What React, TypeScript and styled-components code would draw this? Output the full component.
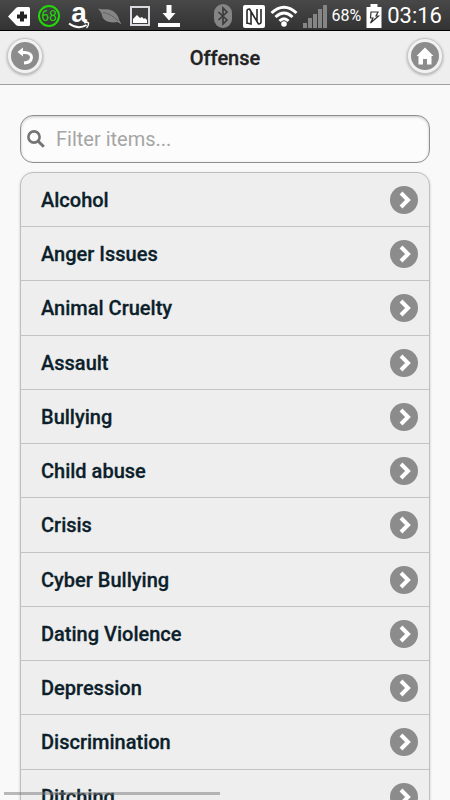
import React, { useState } from "react";
import styled, { createGlobalStyle } from "styled-components";

const GlobalStyle = createGlobalStyle`
  * { box-sizing: border-box; }
  body {
    margin: 0;
    background: #f9f9f9;
    font-family: Roboto, "Liberation Sans", sans-serif;
  }
`;

const Screen = styled.div`
  position: relative;
  display: flex;
  flex-direction: column;
  height: 100vh;
  overflow: hidden;
`;

const StatusBar = styled.div`
  display: flex;
  flex: none;
  justify-content: space-between;
  align-items: center;
  height: 31px;
  padding: 2px 8px 0;
  background: linear-gradient(#484848, #333333);
  border-bottom: 1px solid #000000;
  color: #ffffff;
`;

const StatusGroup = styled.div<{ $gap: number }>`
  display: flex;
  align-items: center;
  gap: ${({ $gap }) => $gap}px;
  height: 28px;

  svg { display: block; flex: none; }
`;

const ChargeBadge = styled.span`
  display: grid;
  place-items: center;
  width: 22px;
  height: 22px;
  border: 2px solid #25d60a;
  border-radius: 50%;
  color: #25d60a;
  font: 400 14px/16px Roboto, sans-serif;
`;

const StoreBadge = styled.span`
  display: grid;
  justify-items: center;
  width: 22px;
  height: 26px;
  font: 700 28px/20px "Liberation Sans", sans-serif;

  > * { grid-area: 1 / 1; }
  > svg { align-self: end; }
`;

const StoreLetter = styled.span`
  align-self: start;
`;

const Percent = styled.span`
  font-size: 16px;
  line-height: 20px;
  white-space: nowrap;
`;

const Clock = styled.time`
  font-size: 22px;
  line-height: 26px;
  text-align: right;
`;

const Header = styled.header`
  display: flex;
  flex: none;
  align-items: center;
  justify-content: space-between;
  height: 54px;
  padding: 0 7px;
  background: #eeeeee;
  border-bottom: 1px solid #a0a0a0;
`;

const Title = styled.h1`
  margin: 0;
  color: #222222;
  font-size: 20px;
  font-weight: 500;
  -webkit-text-stroke: 0.3px #222222;
  line-height: 26px;
`;

const RoundButton = styled.button`
  display: grid;
  place-items: center;
  width: 36px;
  height: 36px;
  margin-bottom: 4px;
  padding: 0;
  border: 1px solid #c8c8c8;
  border-radius: 50%;
  background: #f2f2f2;
  box-shadow: 0 1px 3px rgba(0, 0, 0, 0.3);
  cursor: pointer;

  svg { display: block; }
`;

const Content = styled.main`
  flex: 1;
  min-height: 0;
  overflow: hidden;
  padding: 30px 20px 0;
`;

const SearchBox = styled.label`
  display: flex;
  align-items: center;
  gap: 11px;
  height: 48px;
  margin-bottom: 9px;
  padding: 0 6px;
  border: 1px solid #8f8f8f;
  border-radius: 13px;
  background: #fcfcfc;
  box-shadow: inset 0 1px 3px rgba(0, 0, 0, 0.22);
`;

const SearchInput = styled.input`
  flex: 1;
  min-width: 0;
  padding: 0;
  border: 0;
  outline: 0;
  background: transparent;
  color: #333333;
  font: 400 20px/28px Roboto, sans-serif;

  &::placeholder { color: #a5a5a5; opacity: 1; }
`;

const List = styled.ul`
  margin: 0;
  padding: 0;
  list-style: none;
  overflow: hidden;
  border: 1px solid #bebebe;
  border-radius: 13px;
  background: #eeeeee;
  box-shadow: 0 1px 3px rgba(0, 0, 0, 0.18);
`;

const Item = styled.li`
  height: 54px;
  border-bottom: 1px solid #c3c3c3;

  &:nth-child(4n + 3) { height: 55px; }
  &:last-child { border-bottom: 0; }
`;

const ItemLink = styled.a`
  display: flex;
  align-items: center;
  justify-content: space-between;
  height: 100%;
  padding: 0 11px 0 20px;
  color: #0c1f2b;
  font-size: 20px;
  font-weight: 500;
  -webkit-text-stroke: 0.3px #0c1f2b;
  line-height: 26px;
  text-decoration: none;
  text-shadow: 0 1px 0 #f6f6f6;
`;

const ScrollThumb = styled.div`
  position: absolute;
  bottom: 5px;
  left: 4px;
  width: 48%;
  height: 3px;
  background: rgba(120, 120, 120, 0.5);
`;

const offenses = [
  "Alcohol",
  "Anger Issues",
  "Animal Cruelty",
  "Assault",
  "Bullying",
  "Child abuse",
  "Crisis",
  "Cyber Bullying",
  "Dating Violence",
  "Depression",
  "Discrimination",
  "Ditching",
];

const BackTagIcon = () => (
  <svg width="22" height="19" viewBox="0 0 22 19">
    <path d="M0 9.5 8 1Q9 0 10.5 0H20.5Q22 0 22 1.5V17.5Q22 19 20.5 19H10.5Q9 19 8 18Z" fill="#fff" />
    <path d="M12 4.500h4v3h3v4h-3v3h-4v-3H9v-4h3Z" fill="#222" />
  </svg>
);

const SmileIcon = () => (
  <svg width="22" height="8" viewBox="0 0 22 8">
    <path d="M1 2.500Q10 9 18.500 4" fill="none" stroke="#fff" strokeWidth="2" />
    <path d="M16 2Q19 .5 20.500 2Q21 4.500 18.500 7" fill="none" stroke="#fff" strokeWidth="1.300" />
  </svg>
);

const LeafIcon = () => (
  <svg width="24" height="17" viewBox="0 0 24 17">
    <path d="M0 .5C4 2 7 .5 11 1.500C17 3 20 7 21 11.500L23.500 16.500L19.500 14C13 15.500 5 13.500 4 7.500C3.500 4 2 3 0 .5Z" fill="#858585" />
    <path d="M5 4.500Q14 6 20 13" fill="none" stroke="#5c5c5c" strokeWidth="0.800" />
  </svg>
);

const PictureIcon = () => (
  <svg width="20" height="20" viewBox="0 0 20 20">
    <rect x="1" y="1" width="18" height="18" fill="#3d3d3d" stroke="#d9d9df" strokeWidth="2" />
    <path d="M3 17v-4l4-4 3 3 2-1 2 2 1-1 2 2v3Z" fill="#fff" />
  </svg>
);

const DownloadIcon = () => (
  <svg width="22" height="22" viewBox="0 0 22 22">
    <path d="M8.500 0h5v8H17.500L11 15.500 4.500 8h4ZM0 18h22v4H0Z" fill="#fff" />
  </svg>
);

const BluetoothIcon = () => (
  <svg width="18" height="24" viewBox="0 0 18 24">
    <rect width="18" height="24" rx="9" fill="#858585" />
    <path d="m4.500 8 8.500 8-4 4V4l4 4-8.500 8" fill="none" stroke="#3c3c3c" strokeWidth="1.700" />
  </svg>
);

const NfcIcon = () => (
  <svg width="22" height="23" viewBox="0 0 22 23">
    <rect width="22" height="23" rx="2" fill="#fff" />
    <path d="M4 19V6q0-2 2.500-2L14 16.500V4M18 4v13q0 2-2.500 2L8 6.500V19L4 18" fill="none" stroke="#2a2a2a" strokeWidth="1.600" />
  </svg>
);

const WifiIcon = () => (
  <svg width="28" height="22" viewBox="0 0 28 22">
    <g fill="none" stroke="#fff" strokeWidth="3">
      <path d="M1.500 8Q14-3.500 26.500 8" />
      <path d="M5.500 12Q14 4 22.500 12" />
      <path d="M9.500 16Q14 11.500 18.500 16" />
    </g>
    <circle cx="14" cy="19" r="2.800" fill="#fff" />
  </svg>
);

const SignalIcon = () => (
  <svg width="24" height="23" viewBox="0 0 24 23">
    <path d="M0 18h4v5H0ZM5 13h4v10H5ZM10 9h4v14h-4ZM15 4h4v19h-4ZM20 0h4v23h-4Z" fill="#858585" />
  </svg>
);

const BatteryIcon = () => (
  <svg width="16" height="24" viewBox="0 0 16 24">
    <path d="M4.500 0h7v3H15.500v21H.5V3h4Z" fill="#fff" />
    <path d="M5 8h7l-2 4h2.500l-8 7 2.500-5H4.500Z" fill="#fff" stroke="#333" strokeWidth="1.200" />
  </svg>
);

const BackIcon = () => (
  <svg width="28" height="28" viewBox="0 0 28 28">
    <circle cx="14" cy="14" r="14" fill="#8c8c8c" />
    <path d="M6.500 10 12 5.500V14.500Z" fill="#fff" />
    <path d="M10 10.500H14Q20.500 11 20.500 15.500Q20 20.500 13 21" fill="none" stroke="#fff" strokeWidth="3" />
  </svg>
);

const HomeIcon = () => (
  <svg width="28" height="28" viewBox="0 0 28 28">
    <circle cx="14" cy="14" r="14" fill="#8c8c8c" />
    <path d="M14 5.500 22.500 14H20.500V22.500H16V17H12V22.500H7.500V14H5.500Z" fill="#fff" />
  </svg>
);

const SearchIcon = () => (
  <svg width="18" height="18" viewBox="0 0 18 18" fill="none" stroke="#747474">
    <circle cx="7" cy="7" r="5.600" strokeWidth="2.600" />
    <path d="m11 11 5.800 5.800" strokeWidth="3" />
  </svg>
);

const ChevronIcon = () => (
  <svg width="28" height="28" viewBox="0 0 28 28">
    <circle cx="14" cy="14" r="14" fill="#8c8c8c" />
    <path d="m11 7 7 7-7 7" fill="none" stroke="#fff" strokeWidth="4" />
  </svg>
);

export default function App() {
  const [query, setQuery] = useState("");
  const visible = offenses.filter((name) =>
    name.toLowerCase().includes(query.toLowerCase())
  );

  return (
    <Screen>
      <GlobalStyle />
      <StatusBar>
        <StatusGroup $gap={8}>
          <BackTagIcon />
          <ChargeBadge>68</ChargeBadge>
          <StoreBadge>
            <StoreLetter>a</StoreLetter>
            <SmileIcon />
          </StoreBadge>
          <LeafIcon />
          <PictureIcon />
          <DownloadIcon />
        </StatusGroup>
        <StatusGroup $gap={11}>
          <BluetoothIcon />
          <StatusGroup $gap={5}>
            <NfcIcon />
            <WifiIcon />
            <SignalIcon />
            <Percent>68%</Percent>
            <BatteryIcon />
            <Clock>03:16</Clock>
          </StatusGroup>
        </StatusGroup>
      </StatusBar>
      <Header>
        <RoundButton type="button" aria-label="Back">
          <BackIcon />
        </RoundButton>
        <Title>Offense</Title>
        <RoundButton type="button" aria-label="Home">
          <HomeIcon />
        </RoundButton>
      </Header>
      <Content>
        <SearchBox>
          <SearchIcon />
          <SearchInput
            type="text"
            aria-label="Filter items"
            placeholder="Filter items..."
            value={query}
            onChange={(event) => setQuery(event.target.value)}
          />
        </SearchBox>
        <List>
          {visible.map((name) => (
            <Item key={name}>
              <ItemLink href="#">
                {name}
                <ChevronIcon />
              </ItemLink>
            </Item>
          ))}
        </List>
      </Content>
      <ScrollThumb />
    </Screen>
  );
}
